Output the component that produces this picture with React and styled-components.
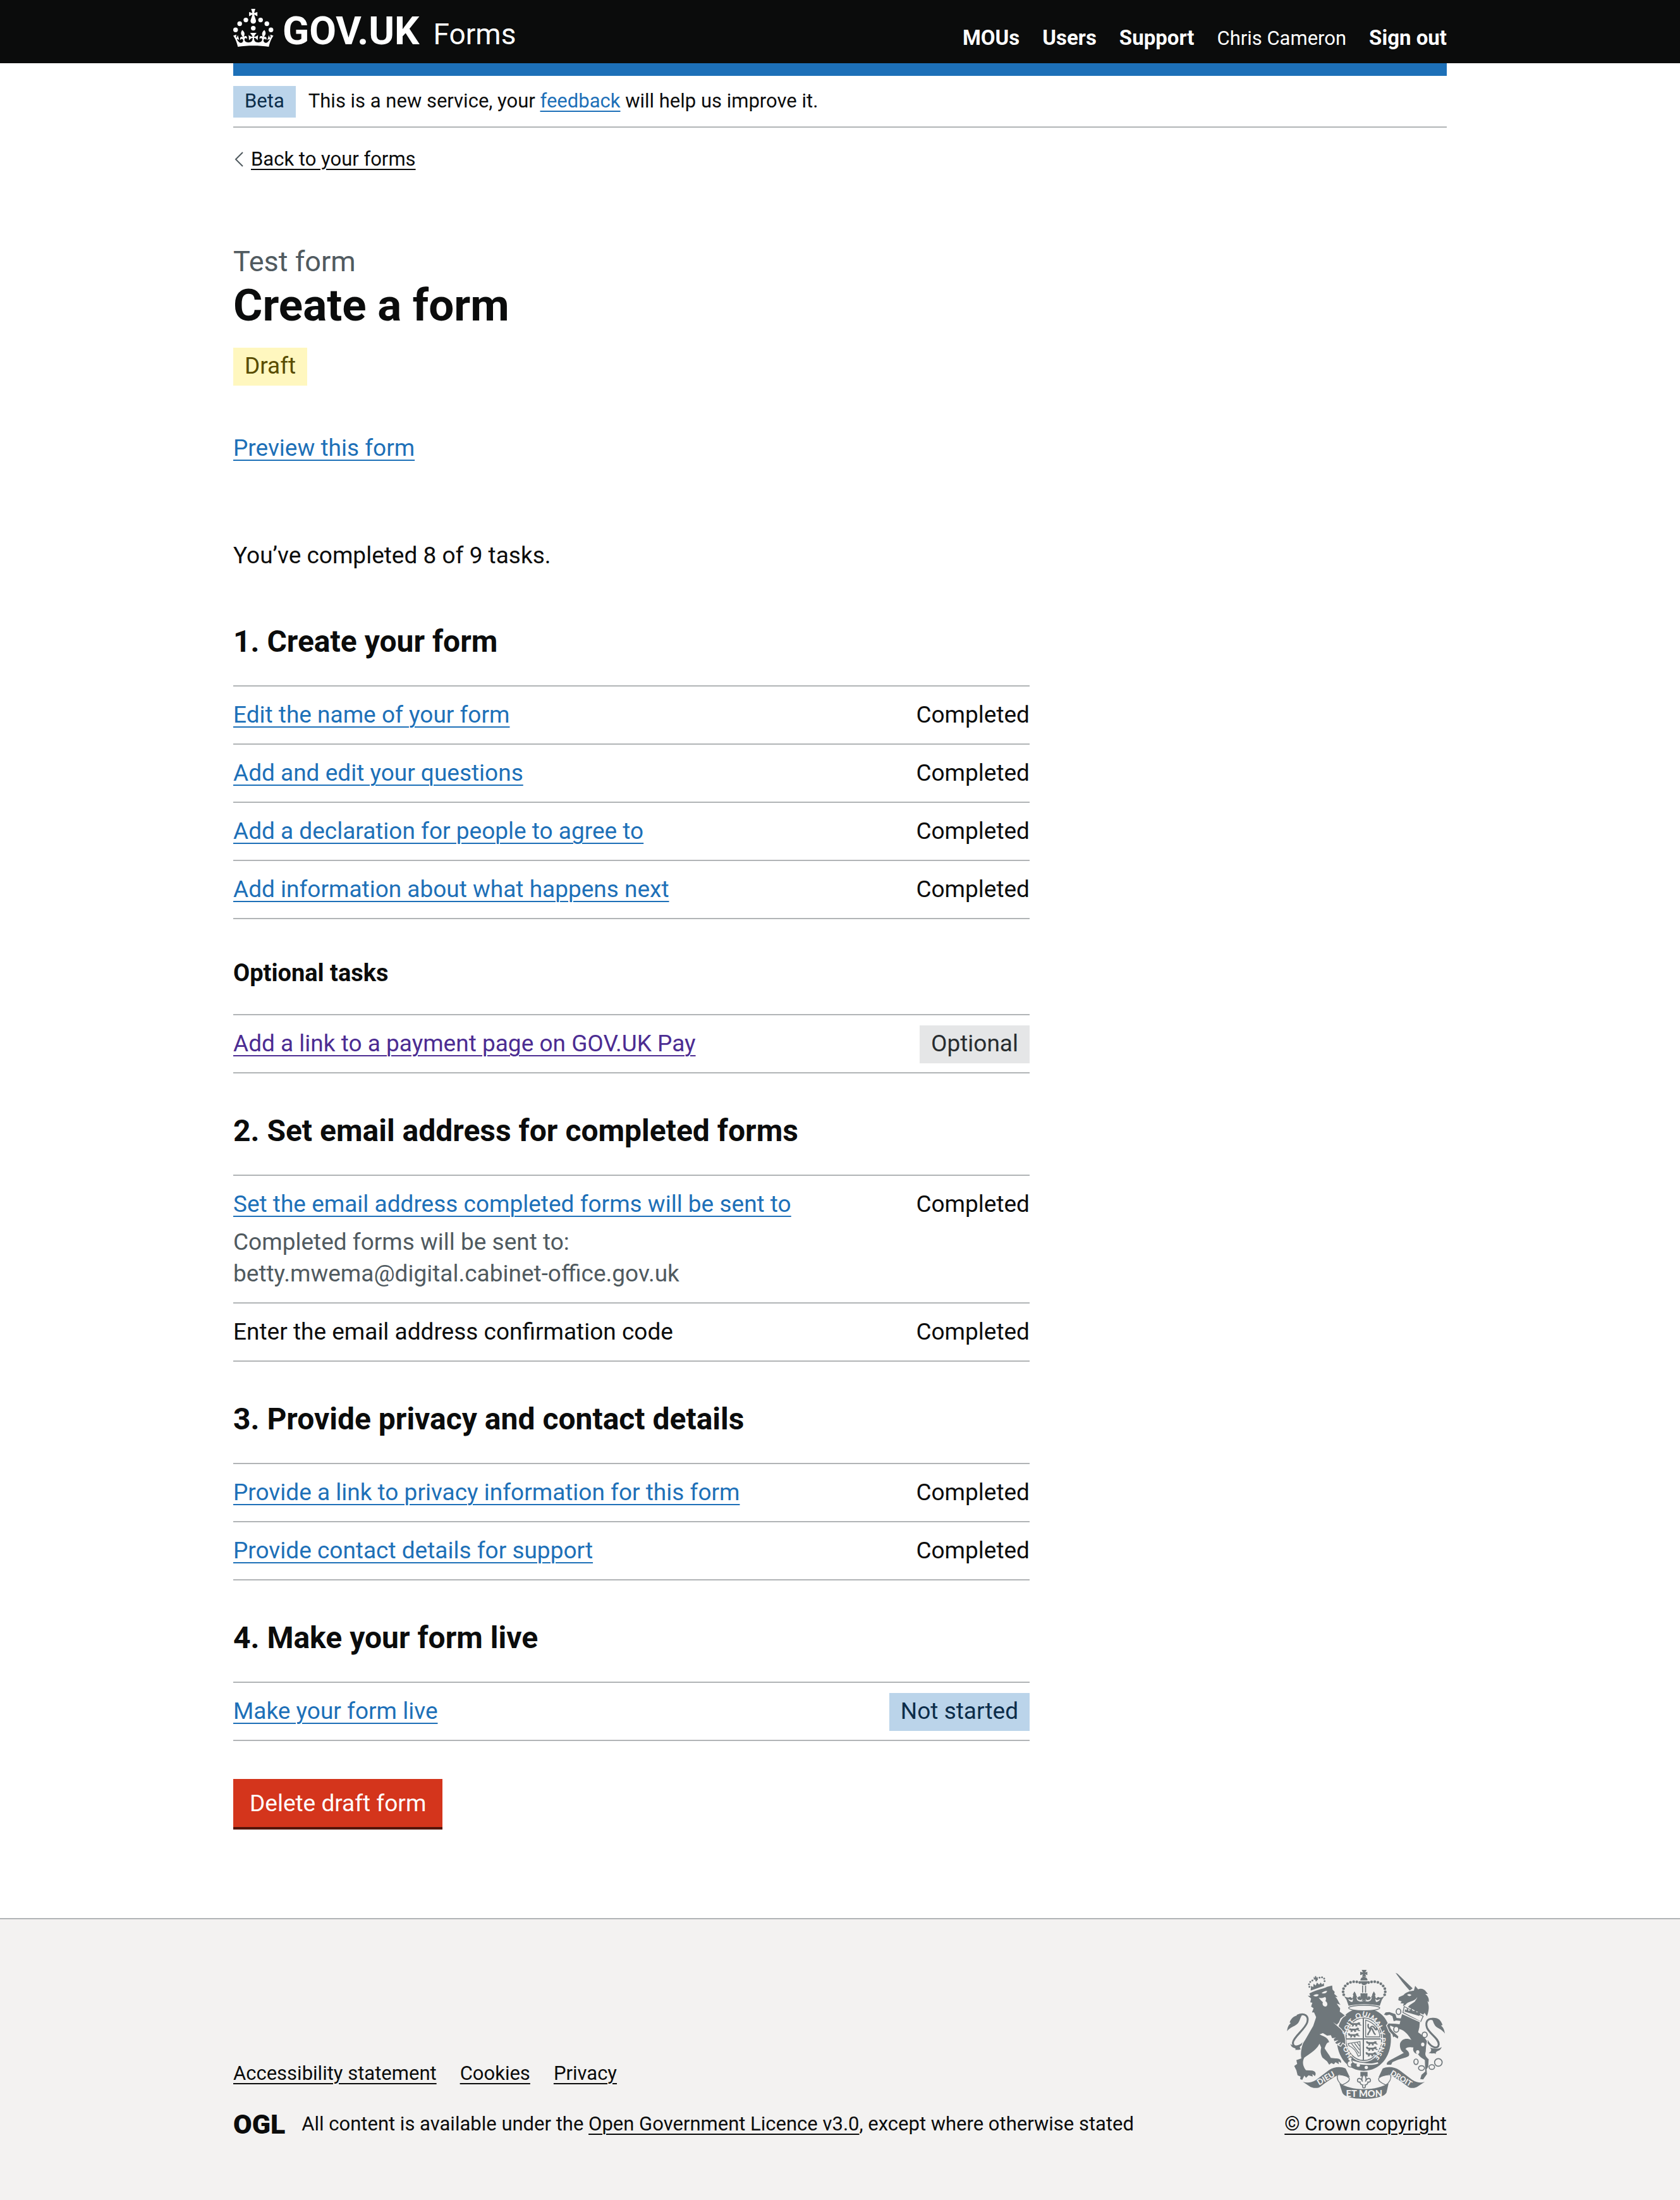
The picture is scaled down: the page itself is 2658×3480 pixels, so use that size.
import React from 'react';
import styled, { createGlobalStyle, css } from 'styled-components';

const color = {
  text: '#0b0c0c',
  secondary: '#505a5f',
  link: '#1d70b8',
  visited: '#4c2c92',
  border: '#b1b4b6',
  page: '#ffffff',
  footer: '#f3f2f1',
  crest: '#6f777b',
};

const tagTones = {
  blue: { text: '#0c2d4a', background: '#bbd4ea' },
  yellow: { text: '#594d00', background: '#fff7bf' },
  grey: { text: '#282d30', background: '#e5e6e7' },
};

const GlobalStyle = createGlobalStyle`
  *, *::before, *::after { box-sizing: border-box; }
  html { background: ${color.footer}; }
  body {
    margin: 0;
    background: ${color.page};
    color: ${color.text};
    font-family: Roboto, "Liberation Sans", sans-serif;
    font-size: 37px;
    line-height: 50px;
  }
  h1, h2, h3, p, ul { margin: 0; padding: 0; }
  ul { list-style: none; }
`;

const small = css`
  font-size: 31px;
  line-height: 40px;
`;

const Container = styled.div`
  max-width: 1980px;
  margin: 0 auto;
  padding: 0 30px;
`;

const Link = styled.a`
  color: ${(p) => (p.$visited ? color.visited : p.$plain ? color.text : color.link)};
  text-decoration: underline;
  text-decoration-thickness: 2px;
  text-underline-offset: ${(p) => (p.$small ? '5px' : '6px')};
`;

/* Header */

const HeaderBar = styled.header`
  background: ${color.text};
  color: #fff;
`;

const HeaderInner = styled.div`
  display: flex;
  justify-content: space-between;
  align-items: flex-start;
  height: 100px;
`;

const HeaderLogo = styled.a`
  display: flex;
  align-items: flex-start;
  padding-top: 14px;
  color: #fff;
  text-decoration: none;
`;

const CrownIcon = styled.svg`
  width: 64px;
  height: 60px;
  margin-right: 14px;
`;

const Wordmark = styled.span`
  font-size: 62px;
  font-weight: 700;
  line-height: 70px;
`;

const ProductName = styled.span`
  margin-left: 22px;
  font-size: 46px;
  line-height: 80px;
`;

const HeaderNav = styled.ul`
  display: flex;
  gap: 36px;
  padding-top: 40px;
  font-size: 33px;
  line-height: 40px;
`;

const NavLink = styled.a`
  color: #fff;
  font-weight: 700;
  text-decoration: none;
`;

const UserName = styled.span`
  font-size: 31px;
`;

const BlueBar = styled.div`
  height: 20px;
  background: ${color.link};
`;

/* Top of page */

const PhaseBanner = styled.div`
  display: flex;
  align-items: flex-start;
  gap: 20px;
  padding: 16px 0 14px;
  border-bottom: 2px solid ${color.border};
`;

const BannerText = styled.p`
  ${small}
  padding-top: 4px;
`;

const Tag = styled.strong`
  display: inline-block;
  padding: 4px 18px 6px;
  background: ${(p) => tagTones[p.$tone].background};
  color: ${(p) => tagTones[p.$tone].text};
  font-weight: 400;
  white-space: nowrap;
  ${(p) => p.$small && small}
`;

const BackLink = styled.a`
  ${small}
  display: flex;
  align-items: center;
  gap: 10px;
  width: fit-content;
  margin-top: 30px;
  color: ${color.text};
  text-decoration: underline;
  text-decoration-thickness: 2px;
  text-underline-offset: 5px;
`;

const Chevron = styled.svg`
  width: 16px;
  height: 24px;
  margin-left: 2px;
`;

/* Main */

const Main = styled.main`
  display: block;
  max-width: 1260px;
  padding: 112px 0 140px;
`;

const Title = styled.h1`
  margin-bottom: 28px;
  font-size: 71px;
  font-weight: 700;
  line-height: 78px;
`;

const Caption = styled.span`
  display: block;
  color: ${color.secondary};
  font-size: 45px;
  font-weight: 400;
  line-height: 60px;
`;

const TitleTag = styled.p`
  display: flex;
`;

const PreviewLine = styled.p`
  margin-top: 74px;
`;

const Summary = styled.p`
  margin: 120px 0 80px;
`;

const SectionHeading = styled.h2`
  margin-bottom: 38px;
  font-size: 48px;
  font-weight: 700;
  line-height: 62px;
`;

const SubHeading = styled.h3`
  margin-bottom: 40px;
  font-size: 38px;
  font-weight: 700;
  line-height: 50px;
`;

const TaskList = styled.ul`
  margin-bottom: 60px;
  border-top: 2px solid ${color.border};
`;

const Task = styled.li`
  display: flex;
  justify-content: space-between;
  align-items: flex-start;
  padding: 20px 0;
  border-bottom: 2px solid ${color.border};
`;

const Hint = styled.div`
  margin-top: 10px;
  color: ${color.secondary};
`;

const Status = styled.div`
  flex: none;
  padding-left: 20px;
  text-align: right;

  ${Tag} {
    display: block;
    margin: -4px 0 -6px;
  }
`;

const WarningButton = styled.button`
  display: block;
  padding: 20px 26px 18px;
  border: 0;
  border-radius: 0;
  margin-bottom: 4px;
  background: #d4351c;
  box-shadow: 0 4px 0 #55150b;
  color: #fff;
  font-family: inherit;
  font-size: 37px;
  line-height: 38px;
`;

/* Footer */

const Footer = styled.footer`
  ${small}
  padding: 80px 0 100px;
  border-top: 2px solid ${color.border};
  background: ${color.footer};
`;

const FooterRow = styled.div`
  display: flex;
  justify-content: space-between;
  align-items: flex-end;
`;

const FooterLinks = styled.ul`
  display: flex;
  gap: 37px;
  margin-bottom: 40px;
`;

const Licence = styled.div`
  display: flex;
  align-items: center;
  gap: 26px;
`;

const OglMark = styled.span`
  font-size: 43px;
  font-weight: 900;
`;

const Copyright = styled.div`
  display: flex;
  flex-direction: column;
  align-items: center;
  gap: 20px;
`;

const CrestImage = styled.svg`
  width: 250px;
  height: 204px;
`;

const CrestText = styled.text`
  font-family: Lato, Roboto, sans-serif;
  font-weight: 900;
  font-size: ${(p) => p.$size}px;
  fill: ${color.footer};
  text-anchor: middle;
`;

/* A body that keeps a thin gap from whatever lies behind it. */
const CutOut = styled.g`
  stroke: ${color.footer};
  stroke-width: 8px;
  paint-order: stroke;
`;

const Crown = () => (
  <CrownIcon viewBox="0 0 64 60" fill="#fff" aria-hidden="true">
    <circle cx="20" cy="17.6" r="3.7" />
    <circle cx="10.2" cy="23.5" r="3.7" />
    <circle cx="3.7" cy="33.2" r="3.7" />
    <circle cx="31.7" cy="30.6" r="3.7" />
    <circle cx="43.3" cy="17.6" r="3.7" />
    <circle cx="53.2" cy="23.5" r="3.7" />
    <circle cx="59.7" cy="33.2" r="3.7" />
    <path d="M33.1,9.8c.2-.1.3-.3.5-.5l4.6,2.4v-6.8l-4.6,1.5c-.1-.2-.3-.3-.5-.5l1.9-5.9h-6.7l1.9,5.9c-.2.1-.3.3-.5.5l-4.6-1.5v6.8l4.6-2.4c.1.2.3.3.5.5l-2.6,8c-.9,2.8,1.2,5.7,4.1,5.7h0c3,0,5.1-2.9,4.1-5.7l-2.6-8ZM37,37.9s-3.4,3.8-4.1,6.1c2.2,0,4.2-.5,6.4-2.8l-.7,8.5c-2-2.8-4.4-4.1-5.7-3.8.1,3.1.5,6.7,5.8,7.2,3.7.3,6.7-1.5,7-3.8.4-2.6-2-4.3-3.7-1.6-1.4-4.5,2.4-6.1,4.9-3.2-1.9-4.5-1.8-7.7,2.4-10.9,3,4,2.6,7.3-1.2,11.1,2.4-1.3,6.2,0,4,4.6-1.2-2.8-3.7-2.2-4.2.2-.3,1.7.7,3.7,3,4.2,1.9.3,4.7-.9,7-5.9-1.3,0-2.4.7-3.9,1.7l2.4-8c.6,2.3,1.4,3.7,2.2,4.5.6-1.6.5-2.8,0-5.3l5,1.8c-2.6,3.6-5.2,8.7-7.3,17.5-7.4-1.1-15.7-1.7-24.5-1.7h0c-8.8,0-17.1.6-24.5,1.7-2.1-8.9-4.7-13.9-7.3-17.5l5-1.8c-.5,2.5-.6,3.7,0,5.3.8-.8,1.6-2.3,2.2-4.5l2.4,8c-1.5-1-2.6-1.7-3.9-1.7,2.3,5,5.2,6.2,7,5.9,2.3-.4,3.3-2.4,3-4.2-.5-2.4-3-3.1-4.2-.2-2.2-4.6,1.6-6,4-4.6-3.7-3.7-4.2-7.1-1.2-11.1,4.2,3.2,4.3,6.4,2.4,10.9,2.5-2.8,6.3-1.3,4.9,3.2-1.8-2.7-4.1-1-3.7,1.6.3,2.3,3.3,4.1,7,3.8,5.4-.5,5.7-4.2,5.8-7.2-1.3-.2-3.7,1-5.7,3.8l-.7-8.5c2.2,2.3,4.2,2.7,6.4,2.8-.7-2.3-4.1-6.1-4.1-6.1h10.6,0Z" />
  </CrownIcon>
);

const crownPearls = [
  [367, 84], [353, 81], [338, 80], [323, 83], [309, 90], [298, 100], [290, 113], [288, 128], [291, 142],
];
const lionPearls = [[128, 104], [126, 92], [132, 81], [142, 74], [164, 68], [176, 61], [188, 59], [198, 65], [200, 77]];
const motto = [
  ['HO', '15.5%'], ['SOIT', '35%'], ['QUI', '49%'], ['MAL', '61%'], ['Y', '70%'], ['PENSE', '82%'],
];

/* One walking lion, used for the quarters of the shield. */
const ShieldLion = ({ x, y }) => (
  <path
    transform={`translate(${x} ${y})`}
    d="M0 2l7-2 5 5 24 0 8-5 8 3-3 6 10 6-9 1-6-4-9 1 4 6-10 2-1-7-7-1-1 7-10 1 4-7-10-3z"
  />
);

const Crest = () => (
  <CrestImage viewBox="21 24 750 612" fill={color.crest} aria-hidden="true">
    {/* Tails */}
    <g fill="none" stroke={color.crest} strokeLinecap="round">
      <path strokeWidth="9" d="M72 240C104 226 126 242 118 272C108 306 54 340 50 368C47 396 84 394 112 356" />
      <path strokeWidth="9" d="M722 262C694 246 676 268 686 298C698 328 744 350 742 378C738 404 706 392 688 362" />
    </g>
    <path d="M22 315C24 290 34 282 40 276L34 274C42 250 62 236 92 240C82 252 84 276 60 288C46 296 34 300 22 315Z" />
    <path d="M38 376C50 384 62 388 88 380C78 392 84 400 92 400C76 406 66 402 60 404C66 398 62 396 50 392C44 390 40 384 38 376Z" />
    <path d="M771 326C768 302 758 292 752 288L760 286C752 262 738 248 706 252C716 262 716 282 730 294C744 304 758 308 771 326Z" />
    <path d="M756 390C746 398 726 402 700 392C712 404 704 414 694 418C712 424 722 416 728 424C726 414 734 410 744 406C750 402 754 396 756 390Z" />

    {/* Garter and shield */}
    <path d="M300 236C268 266 258 310 258 352C258 438 312 503 386 503C462 503 515 438 515 352C515 280 480 206 386 206C350 206 320 216 300 236Z" />
    <ellipse cx="386" cy="353" rx="92" ry="108" fill={color.footer} />
    <ellipse cx="386" cy="353" rx="85" ry="101" fill="none" stroke={color.crest} strokeWidth="5" />
    <path fill="none" stroke={color.crest} strokeWidth="6" d="M384 252V452M301 352H471" />
    <path fill="none" stroke={color.crest} strokeWidth="4" d="M395 262V342H462C462 310 440 276 395 262Z" />
    <ShieldLion x={318} y={272} />
    <ShieldLion x={312} y={298} />
    <ShieldLion x={310} y={324} />
    <ShieldLion x={396} y={362} />
    <ShieldLion x={396} y={388} />
    <ShieldLion x={394} y={414} />
    <path fill="none" stroke={color.crest} strokeWidth="7" d="M406 334C404 318 418 322 416 304C408 300 404 292 408 280M416 304C432 296 426 320 442 332M418 312C414 292 430 284 438 302C444 312 450 308 446 298" />
    <path fill="none" stroke={color.crest} strokeWidth="4" d="M312 374C330 370 348 368 368 364L370 430L360 434C350 408 334 392 316 384ZM328 374L364 420M342 372L366 404M354 368L366 386" />
    <path d="M436 448L458 430C462 440 468 446 470 456L436 470L408 462Z" />
    <path fill={color.footer} d="M318 448C336 456 352 462 386 466C414 470 436 468 452 462L456 468C440 476 414 476 386 474C356 472 334 466 316 456Z" />
    <circle cx="360" cy="476" r="8" fill={color.footer} />
    <circle cx="398" cy="487" r="8" fill={color.footer} />
    <path fill={color.footer} stroke={color.crest} strokeWidth="4" d="M332 440C312 432 304 450 318 456C302 462 306 490 330 484C324 474 326 466 336 466C328 458 326 450 332 440Z" />

    {/* Lion */}
    <CutOut>
      <path d="M120 146L132 148L128 136C160 118 200 112 212 104L236 98L238 118L248 128L246 138L262 152L250 152C262 160 264 174 276 190L258 184C264 194 268 200 274 206L272 222L296 240L276 254L268 274L258 284L240 272L268 298C286 312 300 332 298 378L286 368L276 384L268 380L278 366L258 376L250 370L266 356L246 362L244 352L254 346L236 348L230 334L212 336L192 324L176 330C190 338 218 344 222 368C210 366 206 384 200 396C208 410 220 424 230 442L252 444C270 442 282 452 278 466L266 458L268 472L252 462L244 472L232 466L222 474L212 458L190 440C180 420 180 410 184 392L176 374L168 388C158 402 130 424 104 440C92 460 98 484 112 500L142 502C160 506 160 520 154 528L142 518L144 530L124 524L112 536L104 526L94 546L84 542L86 530L72 524L66 500L56 480L70 470L66 452L90 444C86 424 88 400 98 372C112 350 128 320 146 290L160 248L150 226L140 226L148 206L136 198L142 180L132 178L136 160Z" />
    </CutOut>
    <g fill={color.footer}>
      <path d="M146 146C156 138 166 138 172 142C168 152 158 152 146 146Z" />
      <path d="M186 134C194 126 206 122 212 124C210 136 198 138 186 134Z" />
      <path d="M172 156C186 160 194 156 202 152C210 158 206 166 204 172C216 178 216 198 204 198C192 198 188 186 192 178L180 166Z" />
    </g>
    <path d="M134 122L198 100L196 86L188 94L182 84L174 94L164 84L158 98L148 90L146 106L136 100Z" />
    <path d="M148 56l5 6 2-9 5 0 1 8 6-3 1 7-7 1 4 11-8 2-1-10-7 2z" />
    {lionPearls.map(([x, y]) => <circle key={`${x}-${y}`} cx={x} cy={y} r="4.5" />)}

    {/* Royal crown */}
    <ellipse cx="388" cy="205" rx="74" ry="13" fill={color.footer} stroke={color.crest} strokeWidth="4" />
    <path d="M314 194L304 166L292 148C302 154 312 158 322 152L332 160L342 128L356 156L366 148L372 158L370 136L404 136L402 158L410 148L420 156L434 128L444 160L454 152C464 158 474 154 484 148L472 166L462 194C420 184 356 184 314 194Z" />
    <g fill={color.footer}>
      <path d="M352 152L360 166L372 168L384 158L380 144L394 144L390 158L402 168L414 166L424 152C424 166 416 174 402 174L388 170L374 174C358 174 350 166 352 152Z" />
      <path d="M312 162L326 168L336 162L332 176C324 176 316 172 312 162ZM464 162L450 168L440 162L444 176C452 176 460 172 464 162Z" />
    </g>
    <path d="M372 136H402L393 150L404 148V164L393 160L398 170H376L381 160L370 164V148L381 150Z" />
    <path d="M342 126l8 14-8 12-8-12zM434 126l8 14-8 12-8-12z" />
    <path d="M376 24L400 24L393 36L403 33L403 49L393 45L398 56L378 56L382 45L369 49L369 33L382 36Z" />
    <path d="M370 74C370 64 378 57 386 57C396 57 404 64 404 74ZM370 78H406C402 94 394 96 388 96C378 96 374 90 370 78Z" />
    <path d="M378 98h5v34h-5zM392 98h5v34h-5z" />
    {crownPearls.map(([x, y]) => (
      <React.Fragment key={`${x}-${y}`}>
        <circle cx={x} cy={y} r="6.5" />
        <circle cx={776 - x} cy={y} r="6.5" />
      </React.Fragment>
    ))}

    {/* Motto round the garter */}
    <path id="garter-line" fill="none" d="M386 465A98 112 0 0 1 386 245A98 112 0 0 1 386 465" />
    <g>
      {motto.map(([word, offset]) => (
        <CrestText key={word} $size={33}>
          <textPath href="#garter-line" startOffset={offset}>{word}</textPath>
        </CrestText>
      ))}
    </g>

    {/* Unicorn */}
    <path d="M537 38L546 42L618 112L604 122L588 104L568 80Z" />
    <path d="M602 126L624 122L630 100L644 116C662 108 676 116 690 138L678 138C690 148 698 160 694 178L688 172C694 190 700 204 686 244L676 230C676 214 660 216 654 210L664 204C648 206 640 204 634 200L630 182C626 168 638 166 640 154C626 178 596 170 584 190L572 196L576 184L560 182L566 174L550 168L552 154L574 144C584 132 594 130 602 126Z" />
    <path d="M640 156C636 178 610 182 596 200L668 236L680 222L660 200Z" />
    <path fill={color.footer} d="M592 142C600 136 608 138 612 144C606 150 598 150 592 142Z" />
    <path fill={color.footer} stroke={color.crest} strokeWidth="4" d="M578 198L668 244L656 270L572 226Z" />
    <path d="M580 222l2-12 6 6 5-12 6 15 9-5 4-10 6 18 9-4 5-10 5 18 9-3 6-7 2 22-6 4z" />
    <CutOut>
      <path d="M568 234L652 272L650 296L644 320C660 330 676 344 686 362L682 384L680 412C674 430 684 440 694 448L692 484L684 496L686 518L668 544L654 542L660 522L678 506L676 452C664 444 650 436 644 424C620 420 618 402 622 392C600 388 588 392 584 400C596 408 606 420 600 432C586 442 560 446 544 452L522 462L516 474L496 474C492 464 504 456 520 448L576 418C562 408 556 392 558 374C566 350 590 346 612 356C602 340 590 320 566 308L548 302L530 296L512 288C508 298 516 304 524 316L550 340L548 350L530 340L526 344L522 330L508 316L496 288L504 278L536 280L556 282L560 266L540 264L528 268L522 244L508 236L494 240L482 236L490 226L508 224L536 234L542 252L562 254Z" />
    </CutOut>
    <g fill="none" stroke={color.crest} strokeWidth="5">
      <ellipse cx="551" cy="222" rx="11" ry="14" />
      <ellipse cx="540" cy="306" rx="12" ry="14" fill={color.footer} />
      <ellipse cx="675" cy="332" rx="12" ry="13" fill={color.footer} />
      <ellipse cx="634" cy="460" rx="10" ry="13" />
      <ellipse cx="660" cy="490" rx="14" ry="11" />
      <ellipse cx="709" cy="485" rx="13" ry="11" />
      <circle cx="740" cy="463" r="18" />
    </g>
    <ellipse cx="666" cy="378" rx="8" ry="9" fill={color.footer} />
    <ellipse cx="642" cy="414" rx="8" ry="9" fill={color.footer} />

    {/* Ribbon */}
    <path d="M97 555C118 562 136 560 160 546L220 500C244 484 276 480 300 492L320 534C304 532 290 528 270 520C256 526 220 548 180 578C168 588 140 586 128 576Z" />
    <path d="M676 555C658 562 640 560 616 546L556 500C532 484 500 480 476 492L456 534C472 532 486 528 506 520C520 526 556 548 596 578C608 588 632 586 644 576Z" />
    <path d="M270 562C300 580 340 590 386 590C432 590 476 580 504 562L494 606C484 628 430 636 386 636C342 636 292 628 284 606Z" />
    <g fill={color.footer} stroke={color.crest} strokeWidth="4">
      <path d="M262 522C286 520 316 530 318 542C318 554 300 562 284 570C266 560 256 540 262 522Z" />
      <path d="M514 522C490 520 458 530 456 542C456 554 474 562 490 570C508 560 518 540 514 522Z" />
    </g>
    <CrestText $size={38} x="206" y="551" transform="rotate(-31 206 538)">DIEU</CrestText>
    <CrestText $size={36} x="564" y="551" transform="rotate(31 564 538)">DROIT</CrestText>
    <CrestText $size={44} x="388" y="628">ET MON</CrestText>

    {/* Fleur-de-lis */}
    <path d="M370 508H404V530H370Z" />
    <path
      fill={color.footer}
      stroke={color.crest}
      strokeWidth="5"
      d="M387 520C398 532 400 542 394 554C402 534 418 536 418 548C418 556 410 558 406 556C404 566 398 570 392 570C396 580 392 584 387 584C382 584 378 580 382 570C376 570 370 566 368 556C364 558 356 556 356 548C356 536 372 534 380 554C374 542 376 532 387 520Z"
    />
  </CrestImage>
);

const TaskRow = ({ label, hint, status = 'Completed', tone, linked = true, visited }) => (
  <Task>
    <div>
      {linked ? <Link href="#" $visited={visited}>{label}</Link> : label}
      {hint && (
        <Hint>
          {hint.map((line) => <div key={line}>{line}</div>)}
        </Hint>
      )}
    </div>
    <Status>{tone ? <Tag $tone={tone}>{status}</Tag> : status}</Status>
  </Task>
);

export default function App() {
  return (
    <>
      <GlobalStyle />
      <HeaderBar>
        <Container>
          <HeaderInner>
            <HeaderLogo href="#">
              <Crown />
              <Wordmark>GOV.UK</Wordmark>
              <ProductName>Forms</ProductName>
            </HeaderLogo>
            <nav aria-label="Account">
              <HeaderNav>
                <li><NavLink href="#">MOUs</NavLink></li>
                <li><NavLink href="#">Users</NavLink></li>
                <li><NavLink href="#">Support</NavLink></li>
                <li><UserName>Chris Cameron</UserName></li>
                <li><NavLink href="#">Sign out</NavLink></li>
              </HeaderNav>
            </nav>
          </HeaderInner>
        </Container>
      </HeaderBar>

      <Container>
        <BlueBar />
        <PhaseBanner>
          <Tag $tone="blue" $small>Beta</Tag>
          <BannerText>
            This is a new service, your <Link href="#" $small>feedback</Link> will help us improve it.
          </BannerText>
        </PhaseBanner>
        <BackLink href="#">
          <Chevron viewBox="0 0 16 24" fill="none" stroke={color.secondary} strokeWidth="2" aria-hidden="true">
            <path d="M13 1L2 12L13 23" />
          </Chevron>
          Back to your forms
        </BackLink>

        <Main>
          <Title>
            <Caption>Test form</Caption>
            Create a form
          </Title>
          <TitleTag><Tag $tone="yellow">Draft</Tag></TitleTag>
          <PreviewLine><Link href="#">Preview this form</Link></PreviewLine>
          <Summary>You’ve completed 8 of 9 tasks.</Summary>

          <SectionHeading>1. Create your form</SectionHeading>
          <TaskList>
            <TaskRow label="Edit the name of your form" />
            <TaskRow label="Add and edit your questions" />
            <TaskRow label="Add a declaration for people to agree to" />
            <TaskRow label="Add information about what happens next" />
          </TaskList>
          <SubHeading>Optional tasks</SubHeading>
          <TaskList>
            <TaskRow label="Add a link to a payment page on GOV.UK Pay" visited status="Optional" tone="grey" />
          </TaskList>

          <SectionHeading>2. Set email address for completed forms</SectionHeading>
          <TaskList>
            <TaskRow
              label="Set the email address completed forms will be sent to"
              hint={['Completed forms will be sent to:', 'betty.mwema@digital.cabinet-office.gov.uk']}
            />
            <TaskRow label="Enter the email address confirmation code" linked={false} />
          </TaskList>

          <SectionHeading>3. Provide privacy and contact details</SectionHeading>
          <TaskList>
            <TaskRow label="Provide a link to privacy information for this form" />
            <TaskRow label="Provide contact details for support" />
          </TaskList>

          <SectionHeading>4. Make your form live</SectionHeading>
          <TaskList>
            <TaskRow label="Make your form live" status="Not started" tone="blue" />
          </TaskList>

          <WarningButton type="button">Delete draft form</WarningButton>
        </Main>
      </Container>

      <Footer>
        <Container>
          <FooterRow>
            <div>
              <FooterLinks>
                <li><Link href="#" $plain $small>Accessibility statement</Link></li>
                <li><Link href="#" $plain $small>Cookies</Link></li>
                <li><Link href="#" $plain $small>Privacy</Link></li>
              </FooterLinks>
              <Licence>
                <OglMark>OGL</OglMark>
                <p>
                  All content is available under the{' '}
                  <Link href="#" $plain $small>Open Government Licence v3.0</Link>, except where otherwise stated
                </p>
              </Licence>
            </div>
            <Copyright>
              <Crest />
              <Link href="#" $plain $small>© Crown copyright</Link>
            </Copyright>
          </FooterRow>
        </Container>
      </Footer>
    </>
  );
}
